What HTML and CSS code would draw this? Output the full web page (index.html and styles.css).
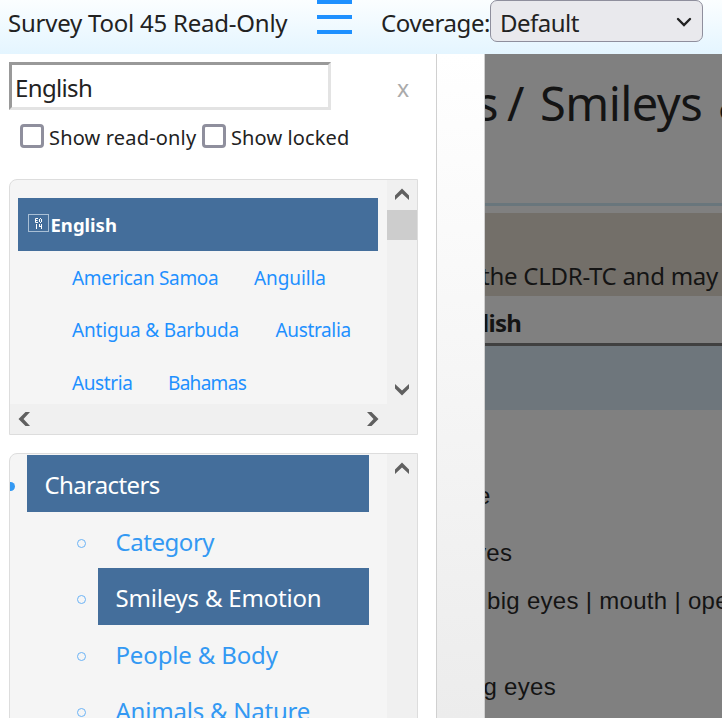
FILE: index.html
```
<!DOCTYPE html>
<html lang="en">
<head>
<meta charset="utf-8">
<title>Survey Tool</title>
<link rel="stylesheet" href="styles.css">
</head>
<body>
<header class="topbar">
  <span class="brand">Survey Tool 45 Read-Only</span>
  <span class="burger"><i></i><i></i><i></i></span>
  <span class="cov">Coverage:</span>
  <span class="select"><span>Default</span><svg width="16" height="11" viewBox="0 0 16 11"><path d="M2 2l6 6 6-6" fill="none" stroke="#222" stroke-width="2.4" stroke-linecap="round"/></svg></span>
</header>
<div class="body">
  <aside class="panel">
    <div class="search"><div class="field">English</div><span class="close">x</span></div>
    <div class="checks">
      <span class="box"></span><span class="ro">Show read-only</span>
      <span class="box"></span><span class="lk">Show locked</span>
    </div>
    <section class="card locales">
      <div class="view">
        <div class="current"><svg width="21" height="19" viewBox="0 0 21 19"><rect x=".5" y=".5" width="20" height="17" fill="none" stroke="#a9bfd5"/><path d="M10 4.500H7.500V8.500H10M7.500 6.500H9.500M11.500 5v3M13.500 5v3M12 4.500h1M12 8.500h1M8.500 10v5M11.500 10v3M11 12.500h3M13.500 10v5" fill="none" stroke="#fff"/></svg><b>English</b></div>
        <div class="links"><a class="l1">American Samoa</a><a class="l2">Anguilla</a></div>
        <div class="links"><a class="l3">Antigua &amp; Barbuda</a><a class="l4">Australia</a></div>
        <div class="links"><a class="l5">Austria</a><a class="l6">Bahamas</a></div>
      </div>
      <div class="vbar">
        <svg width="30" height="30"><path d="M8 20v-4.500l7-7 7 7V20l-7-6.500z" fill="#606060"/></svg>
        <span class="thumb"></span>
        <svg class="down" width="30" height="30"><path d="M8 10v4.500l7 7 7-7V10l-7 6.500z" fill="#606060"/></svg>
      </div>
      <div class="hbar">
        <svg width="30" height="30"><path d="M20 8h-4.500l-7 7 7 7H20l-6.500-7z" fill="#606060"/></svg>
        <svg width="30" height="30"><path d="M10 8h4.500l7 7-7 7H10l6.500-7z" fill="#606060"/></svg>
      </div>
    </section>
    <section class="card pages">
      <div class="view">
        <div class="group"><span class="dot"></span><span class="title">Characters</span></div>
        <div class="item"><i></i><a class="p1">Category</a></div>
        <div class="item"><i></i><a class="p2 on">Smileys &amp; Emotion</a></div>
        <div class="item"><i></i><a class="p3">People &amp; Body</a></div>
        <div class="item"><i></i><a class="p4">Animals &amp; Nature</a></div>
      </div>
      <div class="vbar">
        <svg width="30" height="30"><path d="M8 20v-4.500l7-7 7 7V20l-7-6.500z" fill="#606060"/></svg>
      </div>
    </section>
  </aside>
  <div class="strip"></div>
  <main class="main">
    <h1><span class="tail">s</span><span class="slash">/</span><span class="name">Smileys</span><span>&amp;</span></h1>
    <div class="notice"><span>the CLDR-TC and may</span></div>
    <div class="colhead"><b>lish</b></div>
    <div class="band"></div>
    <div class="row r1">e</div>
    <div class="row r2">yes</div>
    <div class="row r3">big eyes | mouth | open</div>
    <div class="row r4">g eyes</div>
  </main>
</div>
</body>
</html>
```
FILE: styles.css
```
* { box-sizing: border-box; }
body {
  margin: 0;
  width: 722px;
  height: 718px;
  overflow: hidden;
  display: flex;
  flex-direction: column;
  background: #fff;
  color: #222;
  font: 24px "Noto Sans", sans-serif;
  white-space: nowrap;
}
svg { display: block; flex: none; }

.topbar {
  flex: none;
  height: 54px;
  display: flex;
  align-items: flex-start;
  line-height: 45px;
  background: linear-gradient(#fbfeff, #e4f5ff);
}
.brand { width: 309px; padding-left: 8px; letter-spacing: -.23px; }
.burger { width: 35px; margin-left: 8px; display: flex; flex-direction: column; gap: 11px; }
.burger i { height: 4px; background: #1e90ff; }
.cov { width: 109px; margin-left: 29px; letter-spacing: -.38px; }
.select {
  width: 213px;
  height: 42px;
  padding: 0 10px 0 9px;
  display: flex;
  justify-content: space-between;
  border: 1px solid #8f8f9d;
  border-radius: 7px;
  background: #e9e9ed;
  line-height: 43px;
  letter-spacing: -.5px;
}
.select svg { margin-top: 16px; }

.body { flex: 1; min-height: 0; display: flex; }
.panel {
  width: 436px;
  padding: 8px 0 0 9px;
  display: flex;
  flex-direction: column;
}
.search { display: flex; height: 48px; flex: none; }
.field {
  width: 322px;
  border: 3px solid;
  border-color: #999 #e3e3e3 #e3e3e3 #999;
  padding-left: 3px;
  line-height: 45px;
  letter-spacing: -.65px;
}
.close { margin-left: 66px; font-size: 23px; line-height: 53px; color: #aaa; }
.checks {
  height: 69px;
  flex: none;
  display: flex;
  align-items: flex-start;
  padding: 14px 0 0 11px;
  font-size: 20px;
  line-height: 27px;
}
.box { width: 24px; height: 24px; border: 3px solid #8f8f9d; border-radius: 4px; }
.ro { width: 153px; padding-left: 5px; letter-spacing: .17px; }
.ro + .box { margin-left: 5px; }
.lk { padding-left: 5px; letter-spacing: .12px; }

.card {
  width: 409px;
  flex: none;
  border: 1px solid #ddd;
  border-radius: 8px 0 0 0;
  background: #f5f5f5;
  display: grid;
  grid-template-columns: 377px 30px;
  overflow: hidden;
}
.locales { height: 256px; grid-template-rows: 224px 30px; }
.pages { height: 300px; margin-top: 18px; }
.view { overflow: hidden; }
.vbar { background: #f0f0f0; display: flex; flex-direction: column; }
.thumb { height: 30px; background: #cdcdcd; }
.down { margin-top: auto; }
.hbar {
  grid-column: 1 / 3;
  padding-right: 30px;
  display: flex;
  justify-content: space-between;
  background: #f0f0f0;
}

.current {
  width: 360px;
  height: 53px;
  margin: 18px 0 0 8px;
  padding-left: 10px;
  display: flex;
  background: #446e9b;
  color: #fff;
  font-size: 18.5px;
  line-height: 53px;
}
.current svg { margin: 16px 1.5px 0 0; }
.links { height: 52.5px; display: flex; padding-left: 62px; font-size: 19px; line-height: 54px; color: #1e90ff; }
.links:nth-child(3) { line-height: 53px; }
.l1 { width: 182px; letter-spacing: -.32px; }
.l2 { letter-spacing: -.1px; }
.l3 { width: 204px; letter-spacing: -.18px; }
.l4 { letter-spacing: -.35px; margin-left: -.5px; }
.l5 { width: 96px; letter-spacing: -.4px; }
.l6 { letter-spacing: -.7px; }

.group { height: 57px; margin-top: 1px; display: flex; align-items: center; line-height: 59px; }
.dot { width: 9px; height: 9px; margin: 6px 12px 0 -4px; border-radius: 50%; background: #3399f3; }
.title {
  width: 342px;
  height: 57px;
  padding-left: 17.5px;
  background: #446e9b;
  color: #fff;
  letter-spacing: -.65px;
}
.item { height: 56.5px; display: flex; align-items: center; color: #3399f3; }
.item i { width: 9px; height: 9px; margin: 6px 12px 0 67px; border: 1px solid #6bb3f5; border-radius: 50%; }
.item a { width: 271px; height: 57px; padding-left: 17.5px; line-height: 59px; }
.item .on { background: #446e9b; color: #fff; }
.p1 { letter-spacing: -.45px; }
.p2 { letter-spacing: -.2px; }
.p3 { letter-spacing: -.15px; }
.p4 { letter-spacing: -.22px; }

.strip {
  width: 49px;
  border: solid #d0d0d0;
  border-width: 0 1px;
  background: linear-gradient(#fff, #ececec);
}
.main { flex: 1; min-width: 0; overflow: hidden; background: #808080; color: #141414; }
.main h1 {
  height: 152px;
  margin: 0;
  display: flex;
  font-size: 47px;
  font-weight: 400;
  line-height: 98px;
  border-bottom: 3px solid #69767c;
}
.main h1 span { flex: none; }
.main h1 .tail { width: 22px; margin-left: -9px; }
.slash { width: 42px; padding-left: 9px; }
.name { width: 178px; letter-spacing: -.55px; }
.notice {
  height: 83px;
  margin-top: 7px;
  padding-top: 44px;
  line-height: 37px;
  letter-spacing: -.26px;
  background: #736f69;
}
.notice span { margin-left: -4px; }
.colhead { height: 50px; border-bottom: 3px solid #404040; line-height: 54px; }
.colhead b { margin-left: -3px; letter-spacing: -.7px; }
.band { height: 64px; background: #6e767c; }
.row { font-family: "Liberation Sans", sans-serif; height: 48px; line-height: 48px; letter-spacing: .3px; }
.r1 { margin: 62px 0 0 -8px; }
.r2 { margin: 9px 0 0 -11px; }
.r3 { margin: 0 0 0 2px; }
.r4 { margin: 38px 0 0 -1.5px; }
```
